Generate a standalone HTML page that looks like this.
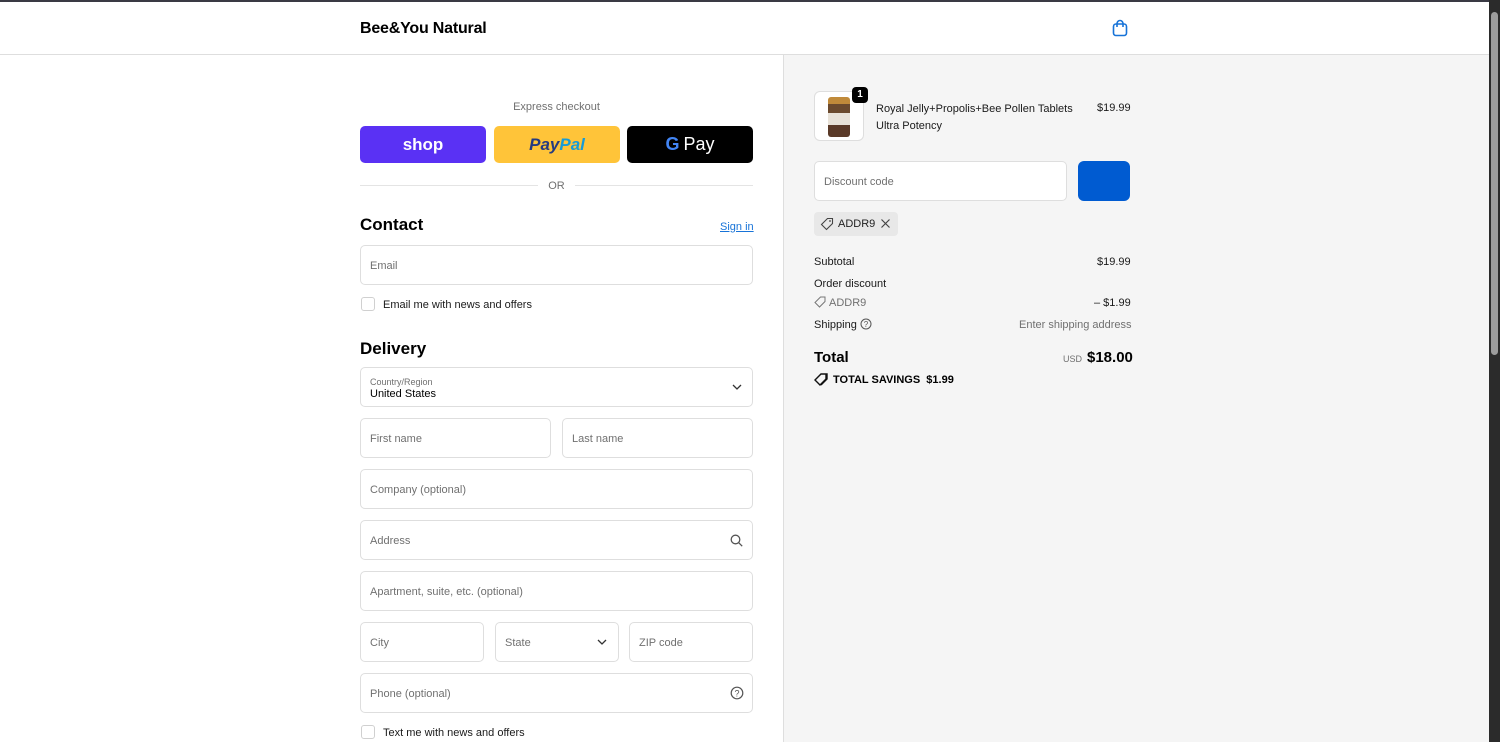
<!DOCTYPE html>
<html><head><meta charset="utf-8"><style>
*{box-sizing:border-box;margin:0;padding:0}
body{width:1500px;height:742px;overflow:hidden;font-family:"Liberation Sans",sans-serif;color:#000;background:#fff;position:relative}
.topline{position:absolute;left:0;top:0;width:1489px;height:2px;background:#3a3a44}
header{position:absolute;left:0;top:2px;width:1489px;height:53px;border-bottom:1px solid #dedede;background:#fff}
.logo{position:absolute;left:360px;top:18px;font-size:16px;font-weight:bold;letter-spacing:-0.2px}
.right{position:absolute;left:783px;top:55px;width:706px;height:687px;background:#f5f5f5;border-left:1px solid #dedede}
.sb{position:absolute;left:1489px;top:0;width:11px;height:742px;background:#2b2b2b}
.thumb{position:absolute;left:1491px;top:12px;width:7px;height:343px;background:#9c9c9c;border-radius:4px}
.abs{position:absolute}
.field{position:absolute;border:1px solid #dedede;border-radius:5px;background:#fff;height:40px;font-size:11px;color:#707070;padding-left:9px;line-height:40px}
.btn{position:absolute;top:126px;height:37px;width:126px;border-radius:5px;display:flex;align-items:center;justify-content:center}
h2{position:absolute;font-size:17px;font-weight:bold;color:#000}
.cb{position:absolute;width:14px;height:14px;border:1px solid #d0d0d0;border-radius:3px;background:#fff}
.small{font-size:11px}
.r{position:absolute;font-size:11px;color:#1a1a1a}
</style></head><body>
<div class="topline"></div>
<header><div class="logo">Bee&amp;You Natural</div>
<svg class="abs" style="left:1112px;top:17px" width="16" height="18" viewBox="0 0 16 18"><rect x="1.5" y="5" width="13" height="11.5" rx="2.5" fill="none" stroke="#1773d8" stroke-width="1.6"/><path d="M5 8V4.5a3 3 0 0 1 6 0V8" fill="none" stroke="#1773d8" stroke-width="1.6"/></svg>
</header>
<div class="right"></div>
<div class="sb"></div><div class="thumb"></div>

<div class="abs small" style="left:360px;width:393px;top:101px;text-align:center;color:#707070">Express checkout</div>
<div class="btn" style="left:360px;background:#5a31f4;color:#fff;font-weight:bold;font-size:17px">shop</div>
<div class="btn" style="left:494px;background:#ffc439;font-weight:bold;font-style:italic;font-size:17px"><span style="color:#253b80">Pay</span><span style="color:#179bd7">Pal</span></div>
<div class="btn" style="left:627px;background:#000;color:#fff;font-size:18px"><span style="font-weight:bold;color:#4285f4;margin-right:4px">G</span>Pay</div>
<div class="abs" style="left:360px;top:185px;width:178px;height:1px;background:#e4e4e4"></div>
<div class="abs" style="left:575px;top:185px;width:178px;height:1px;background:#e4e4e4"></div>
<div class="abs small" style="left:538px;width:37px;top:180px;text-align:center;color:#707070">OR</div>

<h2 style="left:360px;top:215px">Contact</h2>
<div class="abs small" style="left:720px;top:221px;color:#1773d8;text-decoration:underline">Sign in</div>
<div class="field" style="left:360px;top:245px;width:393px">Email</div>
<div class="cb" style="left:361px;top:297px"></div>
<div class="abs small" style="left:383px;top:299px;color:#1a1a1a">Email me with news and offers</div>

<h2 style="left:360px;top:339px">Delivery</h2>
<div class="field" style="left:360px;top:367px;width:393px;line-height:normal;padding-top:9px"><div style="font-size:9px">Country/Region</div><div style="color:#000;font-size:11px;margin-top:1px">United States</div></div>
<svg class="abs" style="left:732px;top:383px" width="10" height="8"><path d="M1 2l4 4 4-4" fill="none" stroke="#333" stroke-width="1.3"/></svg>
<div class="field" style="left:360px;top:418px;width:191px">First name</div>
<div class="field" style="left:562px;top:418px;width:191px">Last name</div>
<div class="field" style="left:360px;top:469px;width:393px">Company (optional)</div>
<div class="field" style="left:360px;top:520px;width:393px">Address</div>
<svg class="abs" style="left:730px;top:534px" width="13" height="13"><circle cx="5.5" cy="5.5" r="4.3" fill="none" stroke="#555" stroke-width="1.3"/><path d="M8.7 8.7l3.5 3.5" stroke="#555" stroke-width="1.3"/></svg>
<div class="field" style="left:360px;top:571px;width:393px">Apartment, suite, etc. (optional)</div>
<div class="field" style="left:360px;top:622px;width:124px">City</div>
<div class="field" style="left:495px;top:622px;width:124px">State</div>
<svg class="abs" style="left:597px;top:638px" width="10" height="8"><path d="M1 2l4 4 4-4" fill="none" stroke="#333" stroke-width="1.3"/></svg>
<div class="field" style="left:629px;top:622px;width:124px">ZIP code</div>
<div class="field" style="left:360px;top:673px;width:393px">Phone (optional)</div>
<svg class="abs" style="left:730px;top:686px" width="14" height="14"><circle cx="7" cy="7" r="5.8" fill="none" stroke="#555" stroke-width="1.2"/><text x="7" y="10.3" font-size="9" text-anchor="middle" fill="#555" font-family="Liberation Sans">?</text></svg>
<div class="cb" style="left:361px;top:725px"></div>
<div class="abs small" style="left:383px;top:727px;color:#1a1a1a">Text me with news and offers</div>

<div class="abs" style="left:814px;top:91px;width:50px;height:50px;border:1px solid #dedede;border-radius:6px;background:#fff"></div>
<div class="abs" style="left:828px;top:97px;width:22px;height:40px;background:linear-gradient(#c08a3a 0 18%,#6b4a2e 18% 40%,#e8e2d8 40% 70%,#5a3a28 70%);border-radius:3px"></div>
<div class="abs" style="left:852px;top:87px;width:16px;height:16px;background:#000;color:#fff;border-radius:4px;font-size:10px;font-weight:bold;text-align:center;line-height:16px">1</div>
<div class="r" style="left:876px;top:101px;line-height:17px">Royal Jelly+Propolis+Bee Pollen Tablets<br>Ultra Potency</div>
<div class="r" style="left:1097px;top:102px">$19.99</div>
<div class="field" style="left:814px;top:161px;width:253px;height:40px;line-height:40px">Discount code</div>
<div class="abs" style="left:1078px;top:161px;width:52px;height:40px;background:#005bd1;border-radius:6px"></div>
<div class="abs" style="left:814px;top:212px;width:84px;height:24px;background:#e8e8e8;border-radius:4px"></div>
<svg class="abs" style="left:820px;top:217px" width="14" height="14"><path d="M7.5 1.5h5v5l-6 6-5-5z" fill="none" stroke="#444" stroke-width="1.1"/><circle cx="10" cy="4" r="0.9" fill="#444"/></svg>
<div class="r" style="left:838px;top:218px;color:#222">ADDR9</div>
<svg class="abs" style="left:880px;top:218px" width="11" height="11"><path d="M1.5 1.5l8 8M9.5 1.5l-8 8" stroke="#444" stroke-width="1.2"/></svg>
<div class="r" style="left:814px;top:256px">Subtotal</div><div class="r" style="left:1097px;top:256px">$19.99</div>
<div class="r" style="left:814px;top:278px">Order discount</div>
<svg class="abs" style="left:814px;top:296px" width="12" height="12"><path d="M6.5 1h4.5v4.5l-5.5 5.5-4.5-4.5z" fill="none" stroke="#777" stroke-width="1"/></svg>
<div class="r" style="left:829px;top:297px;color:#707070">ADDR9</div><div class="r" style="left:1094px;top:297px">– $1.99</div>
<div class="r" style="left:814px;top:319px">Shipping</div>
<svg class="abs" style="left:860px;top:318px" width="12" height="12"><circle cx="6" cy="6" r="5" fill="none" stroke="#555" stroke-width="1"/><text x="6" y="9" font-size="8" text-anchor="middle" fill="#555" font-family="Liberation Sans">?</text></svg>
<div class="r" style="left:1019px;top:319px;color:#707070">Enter shipping address</div>
<div class="abs" style="left:814px;top:349px;font-size:15px;font-weight:bold">Total</div>
<div class="abs" style="left:1063px;top:354px;font-size:9px;color:#707070">USD</div>
<div class="abs" style="left:1087px;top:349px;font-size:15px;font-weight:bold">$18.00</div>
<svg class="abs" style="left:814px;top:373px" width="15" height="13"><path d="M7 1h5v5l-6 6-5-5z M9 1h4v5l-6 6" fill="none" stroke="#111" stroke-width="1.4"/></svg>
<div class="abs" style="left:833px;top:374px;font-size:11px;font-weight:bold">TOTAL SAVINGS&nbsp; $1.99</div>
</body></html>
